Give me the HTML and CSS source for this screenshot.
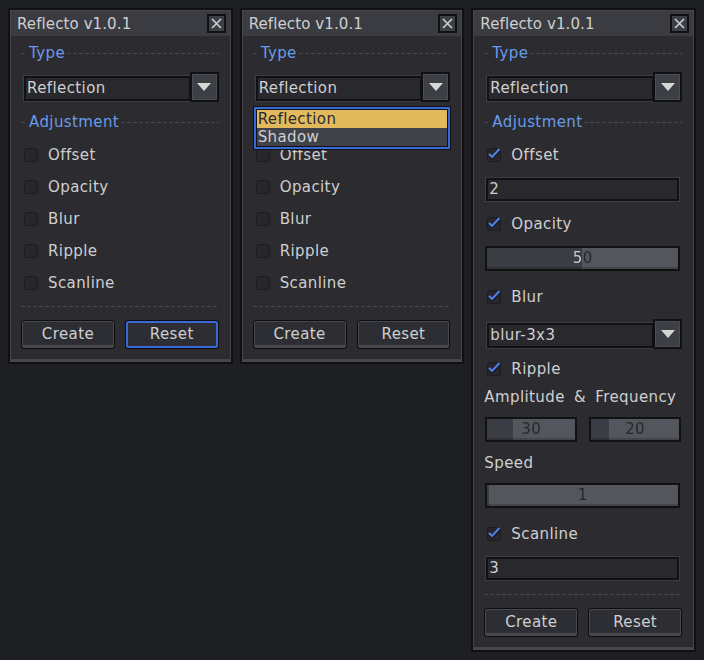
FILE: index.html
```html
<!DOCTYPE html>
<html>
<head>
<meta charset="utf-8">
<title>Reflecto</title>
<link rel="stylesheet" href="styles.css">
</head>
<body>
<div class="desk">

  <!-- Panel 1 -->
  <section class="win">
    <div class="win-in">
      <header class="titlebar"><span>Reflecto v1.0.1</span><span class="close"><svg width="11" height="11" viewBox="0 0 11 11"><path d="M1 1L10 10M10 1L1 10" stroke="#d0d0d0" stroke-width="1.6"/></svg></span></header>
      <div class="content">
        <div class="sec"><i class="dash lead"></i><span>Type</span><i class="dash"></i></div>
        <div class="select"><div class="field">Reflection</div><div class="arrow"><i></i></div></div>
        <div class="sec"><i class="dash lead"></i><span>Adjustment</span><i class="dash"></i></div>
        <label class="check"><svg class="box" viewBox="0 0 14 14"><rect x="0.5" y="0.5" width="13" height="13" rx="2" fill="#27272b" stroke="#1c1c1f"/></svg>Offset</label>
        <label class="check"><svg class="box" viewBox="0 0 14 14"><rect x="0.5" y="0.5" width="13" height="13" rx="2" fill="#27272b" stroke="#1c1c1f"/></svg>Opacity</label>
        <label class="check"><svg class="box" viewBox="0 0 14 14"><rect x="0.5" y="0.5" width="13" height="13" rx="2" fill="#27272b" stroke="#1c1c1f"/></svg>Blur</label>
        <label class="check"><svg class="box" viewBox="0 0 14 14"><rect x="0.5" y="0.5" width="13" height="13" rx="2" fill="#27272b" stroke="#1c1c1f"/></svg>Ripple</label>
        <label class="check"><svg class="box" viewBox="0 0 14 14"><rect x="0.5" y="0.5" width="13" height="13" rx="2" fill="#27272b" stroke="#1c1c1f"/></svg>Scanline</label>
        <div class="sep"></div>
        <div class="actions"><button class="btn">Create</button><button class="btn primary">Reset</button></div>
      </div>
    </div>
  </section>

  <!-- Panel 2 -->
  <section class="win">
    <div class="win-in">
      <header class="titlebar"><span>Reflecto v1.0.1</span><span class="close"><svg width="11" height="11" viewBox="0 0 11 11"><path d="M1 1L10 10M10 1L1 10" stroke="#d0d0d0" stroke-width="1.6"/></svg></span></header>
      <div class="content">
        <div class="sec"><i class="dash lead"></i><span>Type</span><i class="dash"></i></div>
        <div class="select">
          <div class="field">Reflection</div><div class="arrow"><i></i></div>
          <ul class="menu">
            <li class="opt active">Reflection</li>
            <li class="opt">Shadow</li>
          </ul>
        </div>
        <div class="sec"><i class="dash lead"></i><span>Adjustment</span><i class="dash"></i></div>
        <label class="check"><svg class="box" viewBox="0 0 14 14"><rect x="0.5" y="0.5" width="13" height="13" rx="2" fill="#27272b" stroke="#1c1c1f"/></svg>Offset</label>
        <label class="check"><svg class="box" viewBox="0 0 14 14"><rect x="0.5" y="0.5" width="13" height="13" rx="2" fill="#27272b" stroke="#1c1c1f"/></svg>Opacity</label>
        <label class="check"><svg class="box" viewBox="0 0 14 14"><rect x="0.5" y="0.5" width="13" height="13" rx="2" fill="#27272b" stroke="#1c1c1f"/></svg>Blur</label>
        <label class="check"><svg class="box" viewBox="0 0 14 14"><rect x="0.5" y="0.5" width="13" height="13" rx="2" fill="#27272b" stroke="#1c1c1f"/></svg>Ripple</label>
        <label class="check"><svg class="box" viewBox="0 0 14 14"><rect x="0.5" y="0.5" width="13" height="13" rx="2" fill="#27272b" stroke="#1c1c1f"/></svg>Scanline</label>
        <div class="sep"></div>
        <div class="actions"><button class="btn">Create</button><button class="btn">Reset</button></div>
      </div>
    </div>
  </section>

  <!-- Panel 3 -->
  <section class="win">
    <div class="win-in">
      <header class="titlebar"><span>Reflecto v1.0.1</span><span class="close"><svg width="11" height="11" viewBox="0 0 11 11"><path d="M1 1L10 10M10 1L1 10" stroke="#d0d0d0" stroke-width="1.6"/></svg></span></header>
      <div class="content">
        <div class="sec"><i class="dash lead"></i><span>Type</span><i class="dash"></i></div>
        <div class="select"><div class="field">Reflection</div><div class="arrow"><i></i></div></div>
        <div class="sec"><i class="dash lead"></i><span>Adjustment</span><i class="dash"></i></div>
        <label class="check"><svg class="box" viewBox="0 0 14 14"><rect x="0.5" y="0.5" width="13" height="13" rx="2" fill="#27272b" stroke="#1c1c1f"/><path d="M2 7.5L5 10.5L12.5 2.5" fill="none" stroke="#141416" stroke-width="2"/><path d="M2 6L5 9L12.5 1" fill="none" stroke="#4f80e6" stroke-width="2"/></svg>Offset</label>
        <div class="input">2</div>
        <label class="check"><svg class="box" viewBox="0 0 14 14"><rect x="0.5" y="0.5" width="13" height="13" rx="2" fill="#27272b" stroke="#1c1c1f"/><path d="M2 7.5L5 10.5L12.5 2.5" fill="none" stroke="#141416" stroke-width="2"/><path d="M2 6L5 9L12.5 1" fill="none" stroke="#4f80e6" stroke-width="2"/></svg>Opacity</label>
        <div class="slider" style="--p:50%"><span class="val">50</span></div>
        <label class="check more"><svg class="box" viewBox="0 0 14 14"><rect x="0.5" y="0.5" width="13" height="13" rx="2" fill="#27272b" stroke="#1c1c1f"/><path d="M2 7.5L5 10.5L12.5 2.5" fill="none" stroke="#141416" stroke-width="2"/><path d="M2 6L5 9L12.5 1" fill="none" stroke="#4f80e6" stroke-width="2"/></svg>Blur</label>
        <div class="select"><div class="field">blur-3x3</div><div class="arrow"><i></i></div></div>
        <label class="check"><svg class="box" viewBox="0 0 14 14"><rect x="0.5" y="0.5" width="13" height="13" rx="2" fill="#27272b" stroke="#1c1c1f"/><path d="M2 7.5L5 10.5L12.5 2.5" fill="none" stroke="#141416" stroke-width="2"/><path d="M2 6L5 9L12.5 1" fill="none" stroke="#4f80e6" stroke-width="2"/></svg>Ripple</label>
        <div class="label wide">Amplitude &amp; Frequency</div>
        <div class="pair">
          <div class="slider" style="--p:30%"><span class="val">30</span></div>
          <div class="slider" style="--p:20%"><span class="val">20</span></div>
        </div>
        <div class="label">Speed</div>
        <div class="slider" style="--p:1%"><span class="val">1</span></div>
        <label class="check more"><svg class="box" viewBox="0 0 14 14"><rect x="0.5" y="0.5" width="13" height="13" rx="2" fill="#27272b" stroke="#1c1c1f"/><path d="M2 7.5L5 10.5L12.5 2.5" fill="none" stroke="#141416" stroke-width="2"/><path d="M2 6L5 9L12.5 1" fill="none" stroke="#4f80e6" stroke-width="2"/></svg>Scanline</label>
        <div class="input">3</div>
        <div class="sep"></div>
        <div class="actions"><button class="btn">Create</button><button class="btn">Reset</button></div>
      </div>
    </div>
  </section>

</div>
</body>
</html>
```

FILE: styles.css
```css
html, body {
  margin: 0;
  background: #1e1f22;
}
body {
  font-family: "DejaVu Sans", "Liberation Sans", sans-serif;
  font-size: 15px;
  letter-spacing: 0.4px;
  color: #cfcfcf;
}
.desk {
  display: flex;
  align-items: flex-start;
  gap: 7px;
  padding: 8px;
}
.win {
  width: 225px;
  box-sizing: border-box;
  border: 2px solid #111113;
  background: #44464c;
  padding: 1px 1px 3px;
}
.win-in {
  background: #2b2b30;
}
.titlebar {
  height: 25px;
  background: #3a3c42;
  display: flex;
  align-items: center;
  justify-content: space-between;
  padding: 0 4px 0 6px;
  letter-spacing: 0.1px;
}
.close {
  width: 19px;
  height: 19px;
  box-sizing: border-box;
  border: 2px solid #111113;
  background: #3d3f46;
  display: flex;
  align-items: center;
  justify-content: center;
}
.content {
  padding: 9px 11px 10px 10px;
  display: flex;
  flex-direction: column;
  gap: 12px;
}
.sec {
  height: 16px;
  display: flex;
  align-items: center;
  gap: 2px;
  color: #6a9be6;
}
.dash {
  flex: 1;
  height: 1px;
  background: repeating-linear-gradient(90deg, #46484e 0 4px, transparent 4px 6px);
}
.dash.lead {
  flex: 0 0 6px;
}
.sec + .select {
  margin-top: -1px;
}
.sec + .check {
  margin-top: 3px;
}
.select + .check {
  margin-top: -2px;
}
.check + .label {
  margin-top: -3px;
}
.label + .pair,
.label + .slider {
  margin-top: -1px;
}
.select {
  position: relative;
  display: flex;
  height: 30px;
  margin-left: 2px;
}
.field {
  flex: 1;
  margin-top: 3px;
  margin-right: -2px;
  height: 27px;
  box-sizing: border-box;
  border: 1px solid #3c3e44;
  box-shadow: inset 0 0 0 2px #111113;
  background: #28282d;
  padding: 0 3px;
  line-height: 25px;
}
.arrow {
  position: relative;
  width: 29px;
  height: 30px;
  box-sizing: border-box;
  border: 2px solid #111113;
  background: #3d3f46;
  box-shadow: inset 0 0 0 1px #4a4c53;
  display: flex;
  align-items: center;
  justify-content: center;
}
.arrow i {
  width: 0;
  height: 0;
  border-left: 7px solid transparent;
  border-right: 7px solid transparent;
  border-top: 8px solid #d6d6d6;
}
.menu {
  position: absolute;
  top: 35px;
  left: -1px;
  right: 0;
  margin: 0;
  padding: 1px;
  list-style: none;
  background: #111113;
  border: 2px solid #3a6ad6;
  outline: 1px solid #111113;
  z-index: 2;
}
.opt {
  height: 18px;
  line-height: 18px;
  padding-left: 1px;
  background: #40424a;
  color: #cfcfcf;
}
.opt.active {
  background: #e3b95e;
  color: #2a2a2e;
}
.check {
  height: 20px;
  display: flex;
  align-items: center;
  gap: 10px;
  padding-left: 3px;
}
.check.more {
  margin-top: 4px;
}
.box {
  width: 14px;
  height: 14px;
  flex: none;
}
.input {
  height: 25px;
  box-sizing: border-box;
  margin: 0 2px 0 1px;
  border: 1px solid #3c3e44;
  box-shadow: inset 0 0 0 2px #111113;
  background: #28282d;
  padding: 0 3px;
  line-height: 23px;
}
.slider {
  height: 25px;
  box-sizing: border-box;
  margin: 0 2px 0 1px;
  border: 2px solid #111113;
  background: linear-gradient(90deg, #3b3d44 var(--p), #53565d var(--p));
  box-shadow: inset 0 -2px 0 rgba(0, 0, 0, 0.18);
  line-height: 21px;
  text-align: center;
}
.val {
  display: block;
  background: linear-gradient(90deg, #cfcfcf var(--p), #25262a var(--p));
  -webkit-background-clip: text;
  background-clip: text;
  color: transparent;
}
.pair {
  display: flex;
  gap: 10px;
}
.pair .slider {
  flex: 1;
  margin: 0 1px;
}
.label {
  height: 18px;
  line-height: 18px;
}
.label.wide {
  word-spacing: 4px;
}
.sep {
  height: 1px;
  margin-top: 1px;
  background: repeating-linear-gradient(90deg, #46484e 0 4px, transparent 4px 6px);
}
.actions {
  display: flex;
  gap: 10px;
  margin-top: 1px;
}
.btn {
  flex: 1;
  height: 29px;
  padding: 0 0 2px;
  font: inherit;
  letter-spacing: inherit;
  color: #cfcfcf;
  background: #2d2e33;
  border: 1px solid #0d0d0f;
  border-radius: 3px;
  box-shadow: inset 0 0 0 1px #46484e, inset 0 -3px 0 #46484e;
}
.btn.primary {
  box-shadow: inset 0 0 0 2px #3a6ad6;
}
```
